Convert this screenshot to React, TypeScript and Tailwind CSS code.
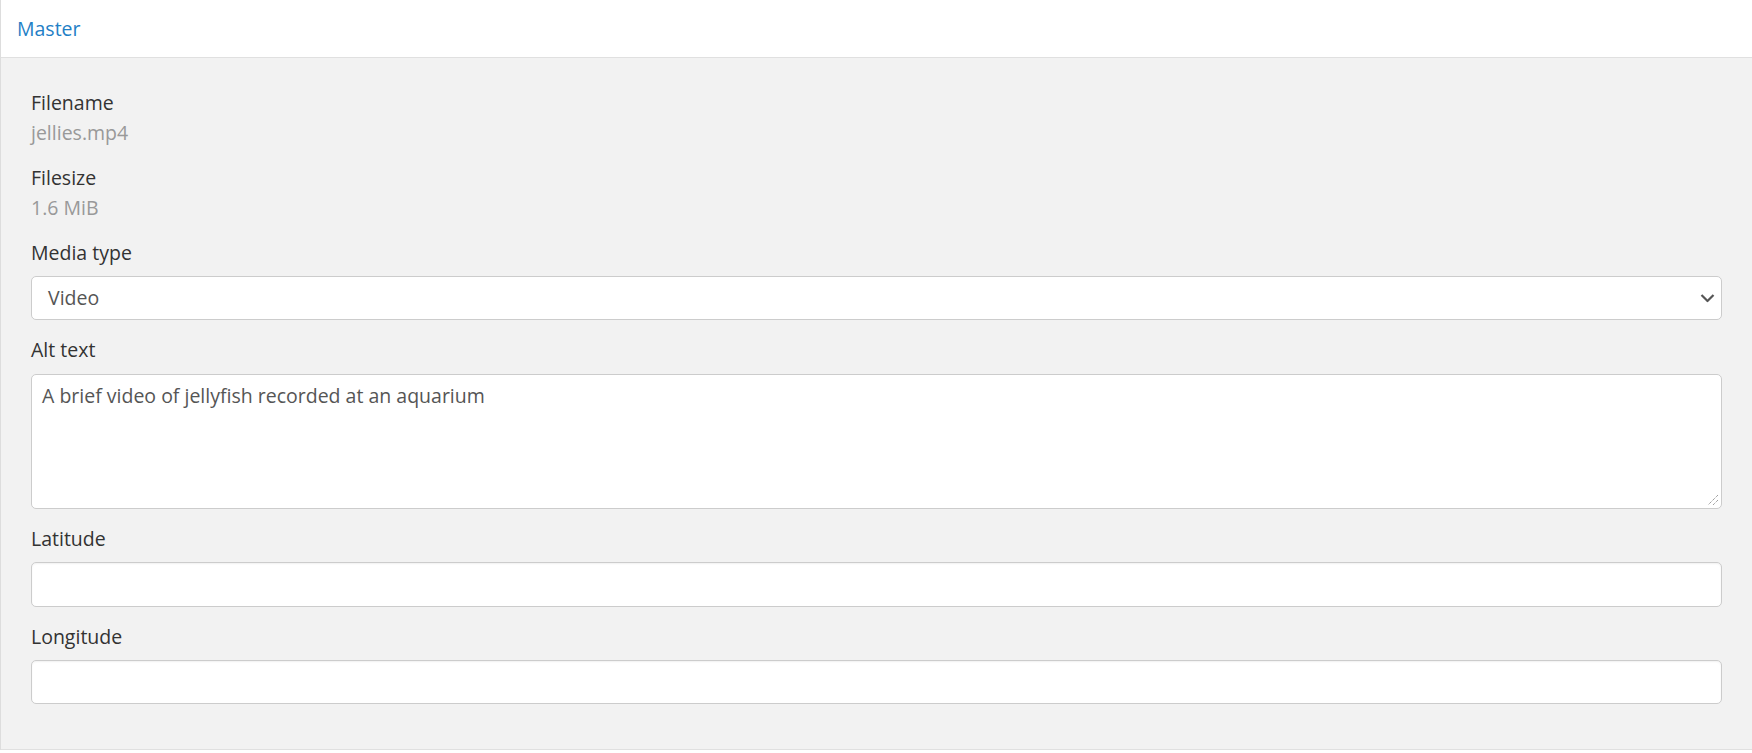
import React from "react";

const font = { fontFamily: '"Open Sans", "Noto Sans", sans-serif' };

function Label({ children }: { children: React.ReactNode }) {
  return <div className="text-[19.5px] leading-[30px] text-[#333333]">{children}</div>;
}

export default function App() {
  return (
    <div className="w-[1752px] h-[753px] bg-white overflow-hidden" style={font}>
      <div className="border-l border-l-[#dddddd]">
        <div className="h-[58px] border-b border-b-[#e0e0e0] bg-white pl-[16px] pt-[14px]">
          <span className="text-[19.5px] leading-[30px] text-[#1f80c6]">Master</span>
        </div>
        <div className="bg-[#f2f2f2] px-[30px] pt-[30px] pb-[30px] border-b border-b-[#e0e0e0]">
          <div className="mb-[15px]">
            <Label>Filename</Label>
            <div className="text-[19.5px] leading-[30px] text-[#999999]">jellies.mp4</div>
          </div>
          <div className="mb-[15px]">
            <Label>Filesize</Label>
            <div className="text-[19.5px] leading-[30px] text-[#999999]">1.6 MiB</div>
          </div>
          <div className="mb-[15px]">
            <Label>Media type</Label>
            <div className="mt-[8px] relative h-[44px] bg-white border border-[#cccccc] rounded-[5px] flex items-center pl-[16px]">
              <span className="text-[19.5px] leading-[30px] text-[#555555]">Video</span>
              <svg className="absolute right-[6px] top-1/2 -translate-y-1/2" width="15" height="9" viewBox="0 0 15 9" fill="none">
                <path d="M1.5 1.5l6 6 6-6" stroke="#555555" strokeWidth="2.2" />
              </svg>
            </div>
          </div>
          <div className="mb-[15px]">
            <Label>Alt text</Label>
            <div className="mt-[9px] relative h-[135px] bg-white border border-[#cccccc] rounded-[5px] px-[10px] pt-[6px]">
              <span className="text-[19.5px] leading-[30px] text-[#555555]">A brief video of jellyfish recorded at an aquarium</span>
              <svg className="absolute right-[2px] bottom-[2px]" width="12" height="12" viewBox="0 0 12 12" fill="none">
                <path d="M11 1L1 11M11 6L6 11" stroke="#777777" strokeWidth="1" strokeDasharray="1 1" />
              </svg>
            </div>
          </div>
          <div className="mb-[15px]">
            <Label>Latitude</Label>
            <div className="mt-[8px] h-[45px] bg-white border border-[#cccccc] rounded-[5px] shadow-[inset_0_1px_2px_rgba(0,0,0,0.06)]" />
          </div>
          <div>
            <Label>Longitude</Label>
            <div className="mt-[8px] h-[44px] bg-white border border-[#cccccc] rounded-[5px] shadow-[inset_0_1px_2px_rgba(0,0,0,0.06)]" />
          </div>
          <div className="h-[15px]" />
        </div>
      </div>
    </div>
  );
}
